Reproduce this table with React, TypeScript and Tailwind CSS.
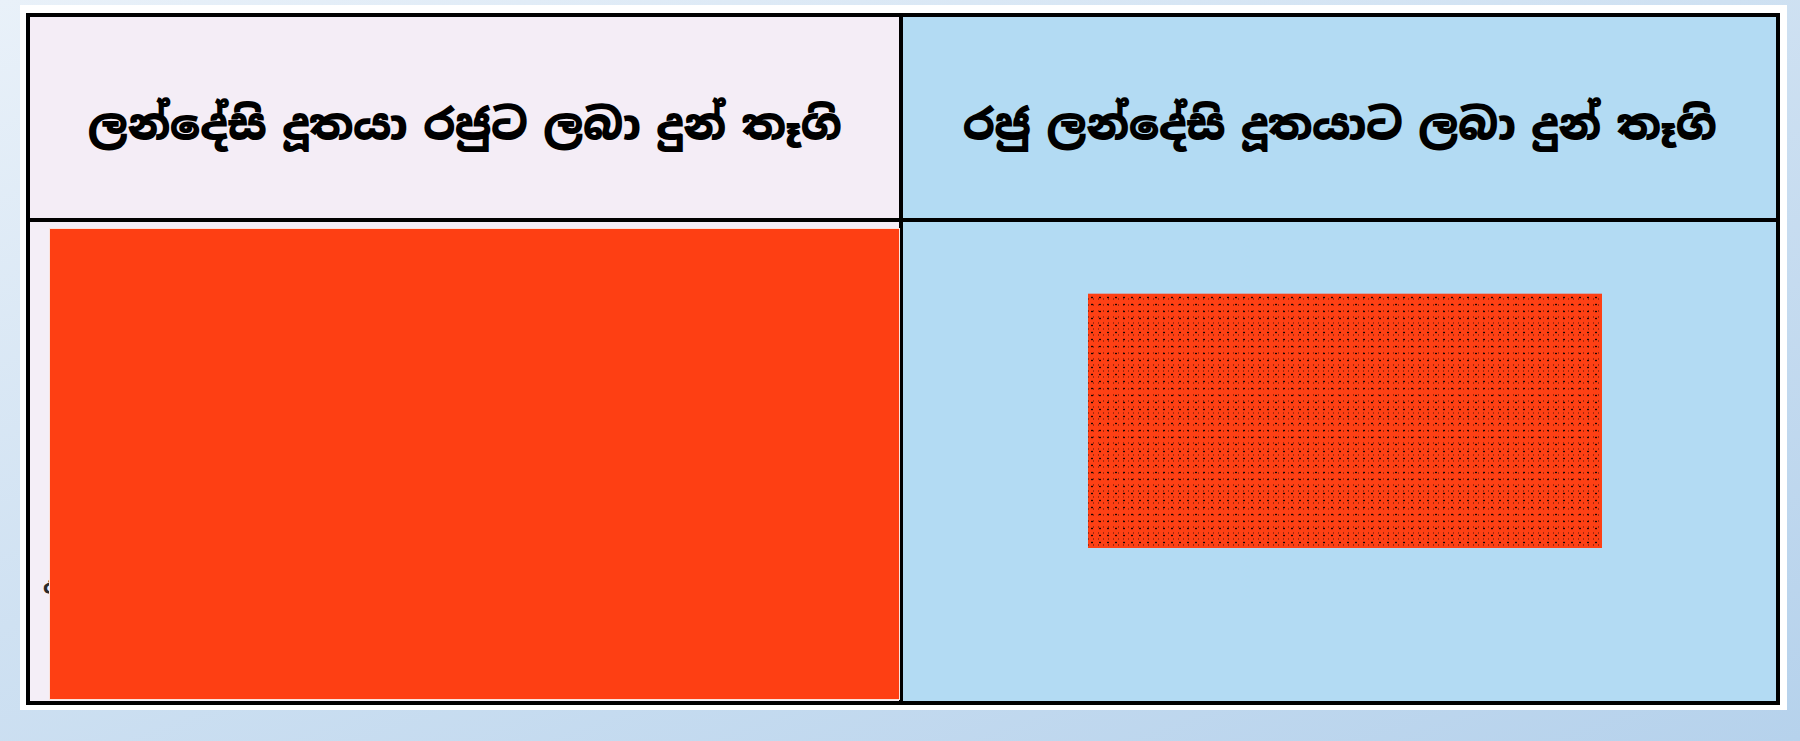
const sinhala = "font-['Noto_Sans_Sinhala','Noto_Serif_Sinhala','Iskoola_Pota','Noto_Sans',sans-serif]";

function HeaderCell({ text, tone }: { text: string; tone: string }) {
  return (
    <div className={`flex h-[205px] items-center justify-center border-b-4 border-black pt-[16px] ${tone}`}>
      <span className={`${sinhala} text-[43px] font-black leading-none tracking-[-0.5px] text-black [word-spacing:-5px]`}>
        {text}
      </span>
    </div>
  );
}

export default function App() {
  return (
    <div className="h-[741px] w-[1800px] overflow-hidden bg-[linear-gradient(160deg,#e9f1f9_0%,#cfe1f2_45%,#b6d2ec_100%)] pl-[20px] pt-[5px]">
      <div className="h-[705px] w-[1767px] bg-white pl-[6px] pt-[8px]">
        <div className="grid h-[692px] w-[1754px] grid-cols-2 grid-rows-[205px_1fr] border-4 border-black">
          <div className="border-r-4 border-black">
            <HeaderCell text="ලන්දේසි දූතයා රජුට ලබා දුන් තෑගි" tone="bg-[#f4edf6]" />
          </div>
          <HeaderCell text="රජු ලන්දේසි දූතයාට ලබා දුන් තෑගි" tone="bg-[#b3dbf3]" />

          <div className="relative border-r-4 border-black bg-[#f4eef7] pl-[20px] pt-[7px]">
            <span className={`${sinhala} absolute left-[13px] top-[346px] text-[24px] font-bold text-[#2a2a2a]`}>අ</span>
            <div className="relative h-[470px] w-[849px] bg-[#fe3f13] shadow-[0_0_0_1px_#fbe3dc]" />
          </div>
          <div className="bg-[#b3dbf3] pl-[185px] pt-[72px]">
            <div className="h-[254px] w-[514px] bg-[#fe4014] bg-[radial-gradient(circle,#1a0602_0.7px,transparent_1.2px),radial-gradient(circle,#a6290c_0.5px,transparent_0.9px)] bg-[length:8px_7px,5px_6px] bg-[position:0_0,3px_2px] shadow-[0_-1px_0_#c9a9b0]" />
          </div>
        </div>
      </div>
    </div>
  );
}
